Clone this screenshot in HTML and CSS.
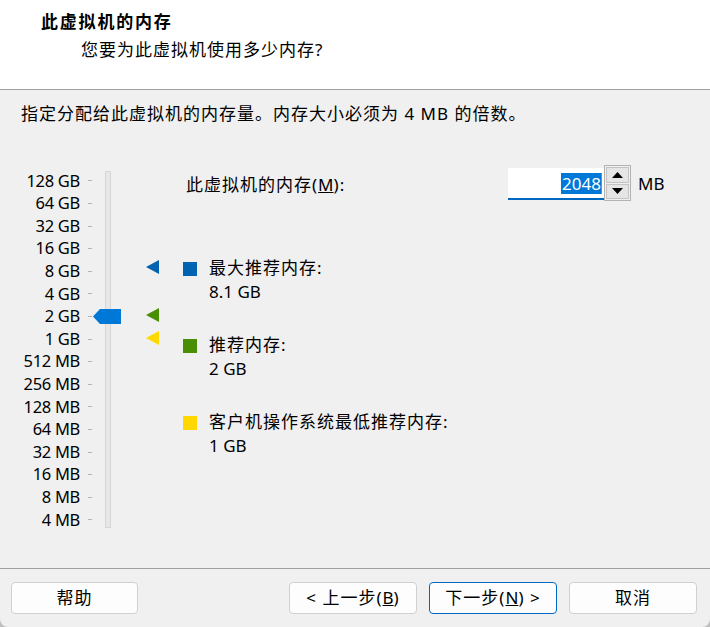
FILE: index.html
```html
<!DOCTYPE html>
<html lang="zh-CN">
<head>
<meta charset="utf-8">
<title>此虚拟机的内存</title>
<link rel="stylesheet" href="styles.css">
</head>
<body>
<div class="window">
  <header class="header">
    <h1 class="title">此虚拟机的内存</h1>
    <p class="subtitle">您要为此虚拟机使用多少内存?</p>
  </header>
  <main class="main">
    <p class="intro">指定分配给此虚拟机的内存量。内存大小必须为 4 MB 的倍数。</p>
    <div class="content">
      <div class="scale">
        <div class="rows">
          <div class="row"><span class="lbl">128 GB</span><i class="tick"></i></div>
          <div class="row"><span class="lbl">64 GB</span><i class="tick"></i></div>
          <div class="row"><span class="lbl">32 GB</span><i class="tick"></i></div>
          <div class="row"><span class="lbl">16 GB</span><i class="tick"></i></div>
          <div class="row"><span class="lbl">8 GB</span><i class="tick"></i></div>
          <div class="row"><span class="lbl">4 GB</span><i class="tick"></i></div>
          <div class="row"><span class="lbl">2 GB</span><i class="tick"></i></div>
          <div class="row"><span class="lbl">1 GB</span><i class="tick"></i></div>
          <div class="row"><span class="lbl">512 MB</span><i class="tick"></i></div>
          <div class="row"><span class="lbl">256 MB</span><i class="tick"></i></div>
          <div class="row"><span class="lbl">128 MB</span><i class="tick"></i></div>
          <div class="row"><span class="lbl">64 MB</span><i class="tick"></i></div>
          <div class="row"><span class="lbl">32 MB</span><i class="tick"></i></div>
          <div class="row"><span class="lbl">16 MB</span><i class="tick"></i></div>
          <div class="row"><span class="lbl">8 MB</span><i class="tick"></i></div>
          <div class="row"><span class="lbl">4 MB</span><i class="tick"></i></div>
        </div>
        <div class="track"></div>
        <div class="thumb" style="top:139.3px"></div>
        <div class="mark blue" style="top:90.3px"></div>
        <div class="mark green" style="top:138.3px"></div>
        <div class="mark yellow" style="top:161.3px"></div>
      </div>
      <div class="panel">
        <div class="memrow">
          <span class="memlabel">此虚拟机的内存(<u>M</u>):</span>
          <div class="input"><span class="sel">2048</span><i class="caret"></i></div>
          <div class="spin">
            <div class="spinbtn"><svg width="11" height="6" viewBox="0 0 11 6"><path d="M0 6 L5.5 0 L11 6 Z" fill="#000"/></svg></div>
            <div class="spinbtn"><svg width="11" height="6" viewBox="0 0 11 6"><path d="M0 0 L5.5 6 L11 0 Z" fill="#000"/></svg></div>
          </div>
          <span class="unit">MB</span>
        </div>
        <div class="legend first">
          <i class="sq blue"></i>
          <div class="ltext"><div class="lt">最大推荐内存:</div><div class="lv">8.1 GB</div></div>
        </div>
        <div class="legend">
          <i class="sq green"></i>
          <div class="ltext"><div class="lt">推荐内存:</div><div class="lv">2 GB</div></div>
        </div>
        <div class="legend">
          <i class="sq yellow"></i>
          <div class="ltext"><div class="lt">客户机操作系统最低推荐内存:</div><div class="lv">1 GB</div></div>
        </div>
      </div>
    </div>
  </main>
  <footer class="footer">
    <button class="btn help">帮助</button>
    <div class="spacer"></div>
    <button class="btn">&lt; 上一步(<u>B</u>)</button>
    <button class="btn primary">下一步(<u>N</u>) &gt;</button>
    <button class="btn">取消</button>
  </footer>
</div>
</body>
</html>
```
FILE: styles.css
```css
html {
  margin: 0;
  padding: 0;
  background: #bdbdbd;
}
body {
  margin: 0;
  width: 710px;
  height: 627px;
  overflow: hidden;
  font-family: "Noto Sans", "Noto Sans CJK SC", sans-serif;
  font-size: 17px;
  color: #000;
}
.window {
  width: 710px;
  height: 627px;
  background: #f0f0f0;
  display: flex;
  flex-direction: column;
  border-radius: 0 0 8px 8px;
  overflow: hidden;
}
.header {
  flex: none;
  background: #fff;
  border-bottom: 1px solid #a0a0a0;
  padding-top: 12px;
  box-sizing: content-box;
  height: 77px;
}
.title {
  margin: 0 0 0 41px;
  font-size: 17px;
  font-weight: bold;
  line-height: 20px;
  letter-spacing: 1.8px;
}
.subtitle {
  margin: 8px 0 0 81px;
  line-height: 20px;
  letter-spacing: 1px;
}
.main {
  flex: 1;
  padding: 14px 0 0 0;
}
.intro {
  margin: 0 0 0 21px;
  line-height: 20px;
  letter-spacing: 1px;
}
.content {
  display: flex;
  margin-top: 45.7px;
}
.scale {
  position: relative;
  width: 183px;
  flex: none;
  display: flex;
  align-items: flex-start;
}
.rows {
  display: flex;
  flex-direction: column;
  width: 92px;
}
.row {
  height: 22.6px;
  line-height: 22.6px;
  display: flex;
  align-items: center;
  white-space: nowrap;
}
.lbl {
  width: 80px;
  text-align: right;
  font-size: 16.5px;
  letter-spacing: -0.3px;
}
.tick {
  display: block;
  width: 4px;
  height: 1px;
  margin-left: 8px;
  background: #b4b4b4;
}
.track {
  margin: 1.3px 0 0 13px;
  width: 4px;
  height: 355px;
  background: #e7e7e7;
  border: 1px solid #d6d6d6;
}
.thumb {
  position: absolute;
  left: 93px;
  width: 28px;
  height: 15px;
  background: #0078d7;
  clip-path: polygon(0 50%, 7px 0, 100% 0, 100% 100%, 7px 100%);
}
.mark {
  position: absolute;
  left: 146px;
  width: 13px;
  height: 14px;
  clip-path: polygon(100% 0, 0 50%, 100% 100%);
}
.blue { background: #0063b1; }
.green { background: #498f05; }
.yellow { background: #ffd800; }
.panel {
  display: flex;
  flex-direction: column;
  margin-top: -4px;
}
.memrow {
  display: flex;
  align-items: center;
  height: 35px;
}
.memlabel {
  width: 322px;
  padding-left: 3px;
  letter-spacing: 1px;
  white-space: nowrap;
}
.memlabel u, .btn u {
  letter-spacing: 0;
}
.input {
  width: 96px;
  height: 32px;
  background: #fff;
  border-bottom: 2px solid #0067c0;
  display: flex;
  align-items: center;
  justify-content: flex-end;
  padding-right: 2px;
  box-sizing: border-box;
  align-self: flex-end;
  margin-bottom: 0.3px;
}
.sel {
  background: #0078d7;
  color: #fff;
  line-height: 21px;
  padding: 0 0 0 1px;
}
.caret {
  display: block;
  width: 1px;
  height: 21px;
  background: #c08020;
}
.spin {
  width: 27px;
  height: 36px;
  box-sizing: border-box;
  border: 1px solid #b3b3b3;
  padding: 1px;
  display: flex;
  flex-direction: column;
  gap: 1px;
  background: #f0f0f0;
}
.spinbtn {
  flex: 1;
  background: #e5e5e5;
  border: 1px solid #c4c4c4;
  display: flex;
  align-items: center;
  justify-content: center;
}
.unit {
  margin-left: 7px;
}
.legend {
  display: flex;
  align-items: flex-start;
  margin-top: 29px;
}
.legend.first {
  margin-top: 55.3px;
}
.sq {
  display: block;
  width: 14px;
  height: 14px;
  margin-top: 6px;
  margin-right: 12px;
  flex: none;
}
.ltext {
  line-height: 24px;
}
.lt {
  letter-spacing: 1px;
  white-space: nowrap;
}
.footer {
  flex: none;
  border-top: 1px solid #a0a0a0;
  display: flex;
  align-items: flex-start;
  padding: 13px 13px 0 11px;
  gap: 12px;
  box-sizing: content-box;
  height: 45px;
}
.spacer {
  flex: 1;
}
.btn {
  width: 128px;
  height: 32px;
  background: #fdfdfd;
  border: 1px solid #d0d0d0;
  border-radius: 4px;
  font-family: "Noto Sans", "Noto Sans CJK SC", sans-serif;
  font-size: 17px;
  letter-spacing: 1px;
  color: #000;
  padding: 0;
  line-height: 28px;
}
.btn.help {
  width: 127px;
}
.btn.primary {
  border-color: #0067c0;
}
```
